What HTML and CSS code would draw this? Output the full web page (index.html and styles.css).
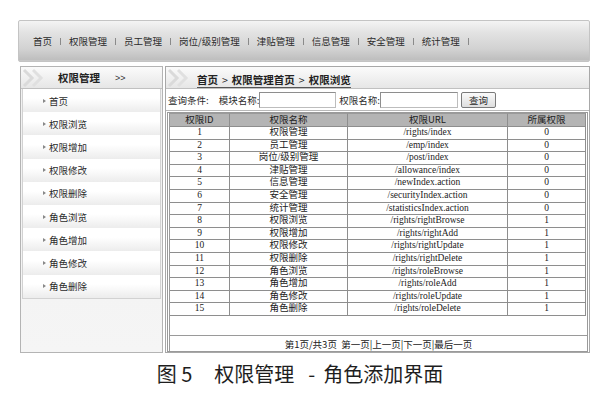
FILE: index.html
```html
<!DOCTYPE html>
<html lang="zh">
<head>
<meta charset="utf-8">
<title>权限管理</title>
<link rel="stylesheet" href="styles.css">
</head>
<body>
<div class="page">
  <div class="nav">
    <span class="nav-item">首页</span><span class="sep"></span>
    <span class="nav-item">权限管理</span><span class="sep"></span>
    <span class="nav-item">员工管理</span><span class="sep"></span>
    <span class="nav-item">岗位/级别管理</span><span class="sep"></span>
    <span class="nav-item">津贴管理</span><span class="sep"></span>
    <span class="nav-item">信息管理</span><span class="sep"></span>
    <span class="nav-item">安全管理</span><span class="sep"></span>
    <span class="nav-item">统计管理</span><span class="sep"></span>
  </div>
  <div class="main">
    <div class="side">
      <div class="side-head">
        <svg class="chev" width="28" height="20" viewBox="0 0 28 20"><polyline points="3,2 11,10 3,18" fill="none" stroke="#dadada" stroke-width="3"/><polyline points="12,2 20,10 12,18" fill="none" stroke="#e0e0e0" stroke-width="3"/></svg>
        <span class="side-title">权限管理</span><span class="side-arrows">&gt;&gt;</span>
      </div>
      <ul class="menu">
        <li>首页</li>
        <li>权限浏览</li>
        <li>权限增加</li>
        <li>权限修改</li>
        <li>权限删除</li>
        <li>角色浏览</li>
        <li>角色增加</li>
        <li>角色修改</li>
        <li>角色删除</li>
      </ul>
    </div>
    <div class="content">
      <div class="crumb-bar">
        <svg class="chev" width="28" height="20" viewBox="0 0 28 20"><polyline points="3,2 11,10 3,18" fill="none" stroke="#dadada" stroke-width="3"/><polyline points="12,2 20,10 12,18" fill="none" stroke="#e0e0e0" stroke-width="3"/></svg>
        <span class="crumb">首页<span class="gt">&gt;</span>权限管理首页<span class="gt">&gt;</span>权限浏览</span>
      </div>
      <div class="query">
        <span class="q-label">查询条件:</span>
        <span class="q-field">模块名称:</span><span class="q-input q-input1"></span>
        <span class="q-field q-field2">权限名称:</span><span class="q-input q-input2"></span>
        <span class="q-btn">查询</span>
      </div>
      <div class="frame">
        <div class="grid">
          <div class="th">权限ID</div><div class="th">权限名称</div><div class="th">权限URL</div><div class="th">所属权限</div>
          <div class="td">1</div><div class="td">权限管理</div><div class="td">/rights/index</div><div class="td">0</div>
          <div class="td">2</div><div class="td">员工管理</div><div class="td">/emp/index</div><div class="td">0</div>
          <div class="td">3</div><div class="td">岗位/级别管理</div><div class="td">/post/index</div><div class="td">0</div>
          <div class="td">4</div><div class="td">津贴管理</div><div class="td">/allowance/index</div><div class="td">0</div>
          <div class="td">5</div><div class="td">信息管理</div><div class="td">/newIndex.action</div><div class="td">0</div>
          <div class="td">6</div><div class="td">安全管理</div><div class="td">/securityIndex.action</div><div class="td">0</div>
          <div class="td">7</div><div class="td">统计管理</div><div class="td">/statisticsIndex.action</div><div class="td">0</div>
          <div class="td">8</div><div class="td">权限浏览</div><div class="td">/rights/rightBrowse</div><div class="td">1</div>
          <div class="td">9</div><div class="td">权限增加</div><div class="td">/rights/rightAdd</div><div class="td">1</div>
          <div class="td">10</div><div class="td">权限修改</div><div class="td">/rights/rightUpdate</div><div class="td">1</div>
          <div class="td">11</div><div class="td">权限删除</div><div class="td">/rights/rightDelete</div><div class="td">1</div>
          <div class="td">12</div><div class="td">角色浏览</div><div class="td">/rights/roleBrowse</div><div class="td">1</div>
          <div class="td">13</div><div class="td">角色增加</div><div class="td">/rights/roleAdd</div><div class="td">1</div>
          <div class="td">14</div><div class="td">角色修改</div><div class="td">/rights/roleUpdate</div><div class="td">1</div>
          <div class="td">15</div><div class="td">角色删除</div><div class="td">/rights/roleDelete</div><div class="td">1</div>
        </div>
        <div class="spacer"></div>
        <div class="pager">第1页/共3页&nbsp;&nbsp;第一页|上一页|下一页|最后一页</div>
      </div>
    </div>
  </div>
  <div class="caption"><span class="cap-num">图 5</span><span class="cap-text">权限管理<span class="cap-dash">-</span>角色添加界面</span></div>
</div>
</body>
</html>
```

FILE: styles.css
```css
html, body {
  margin: 0;
  padding: 0;
  background: #ffffff;
}
body {
  width: 600px;
  height: 394px;
  overflow: hidden;
  font-family: "Noto Sans CJK SC", "Liberation Sans", sans-serif;
  color: #222;
}
.page {
  padding: 20px 10px 0 18px;
}
.nav {
  box-sizing: border-box;
  height: 42px;
  border: 1px solid #c4c4c4;
  border-radius: 2px;
  background: linear-gradient(#f4f4f4 0%, #e2e2e2 30%, #d2d2d2 70%, #bcbcbc 100%);
  box-shadow: inset 0 -12px 0 -11px #c8c8c8;
  display: flex;
  align-items: center;
  padding-left: 14px;
  font-size: 9.5px;
  color: #2a2a2a;
}
.nav-item {
  white-space: nowrap;
}
.sep {
  width: 1px;
  height: 7px;
  background: #8a8a8a;
  margin: 0 8px;
}
.main {
  display: flex;
  gap: 2px;
  margin-top: 4px;
  padding-left: 2px;
  height: 287px;
}
.side {
  box-sizing: border-box;
  width: 143px;
  height: 287px;
  border: 1px solid #b4b4b4;
  background: linear-gradient(#f0f0f0, #f5f5f5);
}
.side-head, .crumb-bar {
  position: relative;
  box-sizing: border-box;
  height: 22px;
  border-bottom: 1px solid #c0c0c0;
  background: linear-gradient(#fbfbfb, #e6e6e6);
  display: flex;
  align-items: center;
}
.chev {
  position: absolute;
  left: 0;
  top: 1px;
}
.side-head {
  padding-left: 37px;
}
.side-title {
  position: relative;
  font-size: 10.5px;
  font-weight: bold;
  color: #222;
}
.side-arrows {
  position: relative;
  margin-left: 15px;
  font-size: 9px;
  color: #333;
  font-family: "Liberation Sans", sans-serif;
}
.menu {
  list-style: none;
  margin: 0 1px;
  padding: 0;
  border: 1px solid #d2d2d2;
  border-top: none;
  background: #fff;
}
.menu li {
  box-sizing: border-box;
  height: 23.2px;
  display: flex;
  align-items: center;
  padding-left: 20px;
  font-size: 9.5px;
  color: #2a2a2a;
  background: linear-gradient(#ffffff 0%, #ffffff 40%, #ececec 100%);
}
.menu li::before {
  content: "";
  width: 0;
  height: 0;
  border-top: 2.5px solid transparent;
  border-bottom: 2.5px solid transparent;
  border-left: 3px solid #888;
  margin-right: 3px;
}
.content {
  box-sizing: border-box;
  width: 425px;
  height: 287px;
  border: 1px solid #a8a8a8;
  display: flex;
  flex-direction: column;
  background: #fff;
}
.crumb-bar {
  padding-left: 31px;
}
.crumb {
  position: relative;
  font-size: 10.5px;
  font-weight: bold;
  color: #222;
  border-bottom: 1px solid #555;
  line-height: 15px;
  margin-top: 5px;
  white-space: nowrap;
}
.gt {
  margin: 0 4px;
  font-weight: normal;
}
.query {
  box-sizing: border-box;
  height: 22px;
  border-bottom: 1px solid #b8b8b8;
  display: flex;
  align-items: center;
  padding-left: 2px;
  font-size: 9.5px;
  color: #2a2a2a;
  white-space: nowrap;
}
.q-field {
  margin-left: 10px;
}
.q-field2 {
  margin-left: 3px;
}
.q-input {
  box-sizing: border-box;
  height: 16px;
  background: #fff;
  border: 1px solid #bdbdbd;
  border-top-color: #8e8e8e;
  border-left-color: #8e8e8e;
}
.q-input1 {
  width: 77px;
}
.q-input2 {
  width: 78px;
}
.q-btn {
  box-sizing: border-box;
  margin-left: 3px;
  width: 35px;
  height: 16px;
  border: 1px solid #7a7a7a;
  border-radius: 2px;
  background: linear-gradient(#fafafa, #dedede);
  display: flex;
  align-items: center;
  justify-content: center;
  font-size: 9.5px;
}
.frame {
  flex: 1;
  margin: 1px 1px 0 1px;
  border: 1px solid #9a9a9a;
  border-left: 3px double #9a9a9a;
  display: flex;
  flex-direction: column;
}
.grid {
  display: grid;
  grid-template-columns: 60px 118px 160px 78px;
  grid-template-rows: 14px;
  grid-auto-rows: 12.6px;
  font-family: "Liberation Serif", "Noto Sans CJK SC", serif;
  font-size: 9.5px;
  color: #222;
}
.th, .td {
  box-sizing: border-box;
  border-right: 1px solid #8e8e8e;
  border-bottom: 1px solid #8e8e8e;
  display: flex;
  align-items: center;
  justify-content: center;
  white-space: nowrap;
  line-height: 1;
}
.th {
  background: #b4b4b4;
  font-family: "Noto Sans CJK SC", "Liberation Sans", sans-serif;
  font-size: 9.5px;
  border-top: 1px solid #9a9a9a;
}
.td {
  background: #fff;
}
.spacer {
  flex: 1;
}
.pager {
  box-sizing: border-box;
  height: 16px;
  border-top: 1px solid #9a9a9a;
  display: flex;
  align-items: center;
  justify-content: center;
  font-size: 9.5px;
  color: #222;
}
.caption {
  margin-top: 9px;
  margin-left: -18px;
  width: 600px;
  text-align: center;
  font-size: 20px;
  line-height: 24px;
  color: #1e1e1e;
  white-space: nowrap;
}
.cap-num {
  margin-right: 22px;
}
.cap-dash {
  margin: 0 8px 0 14px;
}
```
